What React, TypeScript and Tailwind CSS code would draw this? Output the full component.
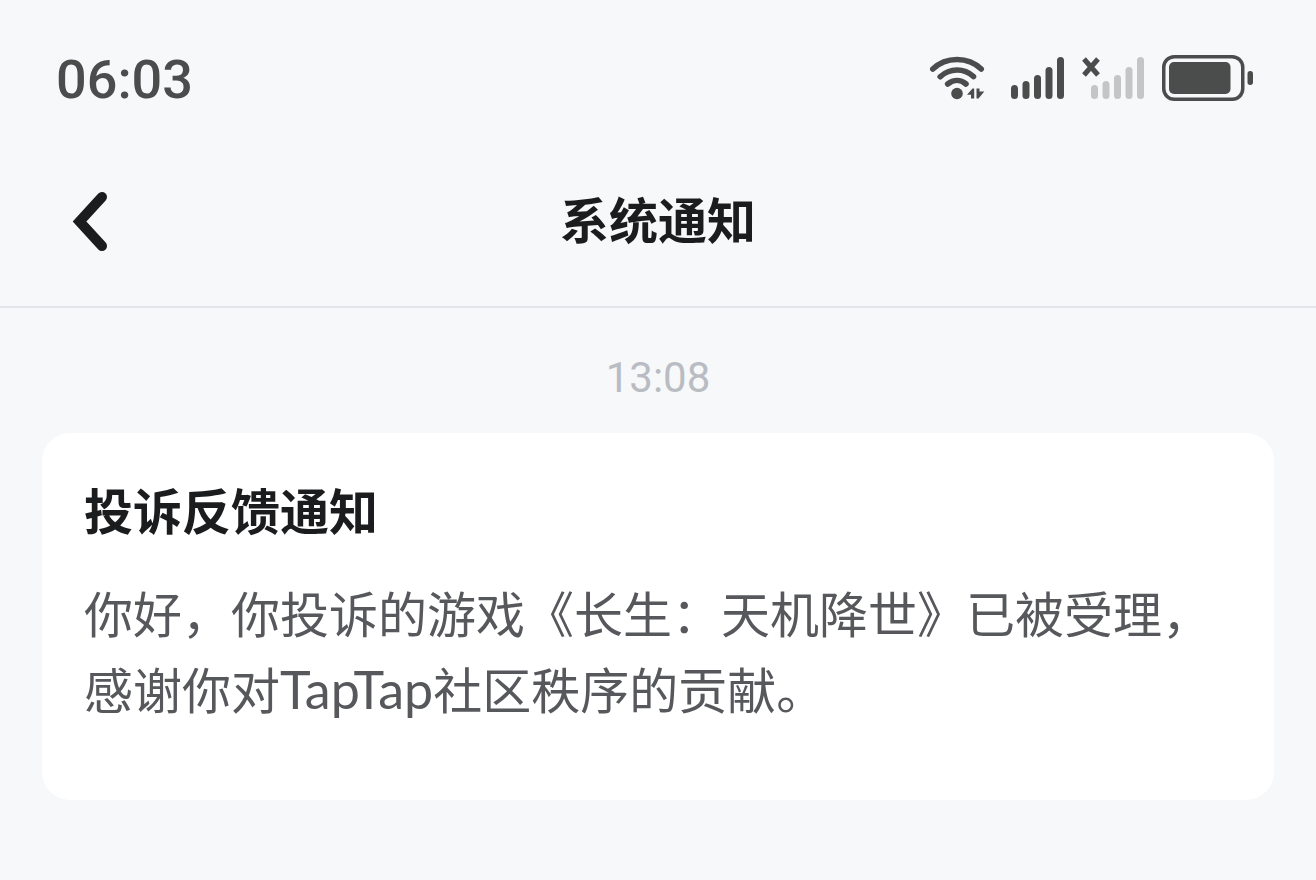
const heights = [14, 18, 24, 32, 42];

function SignalBars({ className }: { className: string }) {
  return (
    <svg viewBox="0 0 54 42" className={`h-[42px] w-[54px] ${className}`} fill="currentColor" aria-hidden="true">
      {heights.map((h, i) => (
        <rect key={h} x={i * 11.5} y={42 - h} width="7" height={h} rx="3.5" />
      ))}
    </svg>
  );
}

function WifiIcon() {
  return (
    <svg viewBox="0 0 56 44" className="h-11 w-14" fill="none" stroke="currentColor" strokeWidth="5.6" strokeLinecap="round" aria-hidden="true">
      <path d="M3.8 13C17 0.3 39 0.3 52.2 13" />
      <path d="M11.2 20.7C21 11.8 35 11.8 44.500 20.500" />
      <path d="M18.700 28C24.500 23.300 31.500 23.300 37 28" />
      <circle cx="28" cy="37.500" r="5.800" fill="currentColor" stroke="none" />
      <path d="M45.200 32.500V42.500H42V38.800H38L43.500 32.500ZM47.500 32.500H50.500V35.500H55.300L49.500 42.500H47.500Z" fill="currentColor" stroke="none" />
    </svg>
  );
}

function BatteryIcon() {
  return (
    <svg viewBox="0 0 92 46" className="h-[46px] w-[92px]" fill="none" aria-hidden="true">
      <rect x="1.750" y="1.750" width="79" height="42.500" rx="10.500" stroke="currentColor" strokeWidth="3.500" />
      <rect x="7" y="7" width="61.500" height="32" rx="5" fill="currentColor" />
      <rect x="85.500" y="16" width="5.500" height="14" rx="2.700" fill="currentColor" />
    </svg>
  );
}

export default function App() {
  return (
    <div className="min-h-screen bg-[#f7f8fa] font-['Noto_Sans_CJK_SC',sans-serif] text-[#1b1c1e]">
      <div className="flex items-center justify-between px-14 pt-10 text-[#4b4c4c]">
        <time className="pt-1 font-['Roboto',sans-serif] text-[54px] leading-[72px] font-medium">06:03</time>
        <div className="flex items-center pr-1.5">
          <WifiIcon />
          <SignalBars className="ml-[26px]" />
          <div className="relative ml-[26px]">
            <SignalBars className="text-[#c4c5c6]" />
            <svg viewBox="0 0 18 20" className="absolute top-0 -left-[9px] h-5 w-[18px]" fill="none" stroke="currentColor" strokeWidth="5" aria-hidden="true">
              <path d="M2 2L16 18M16 2L2 18" />
            </svg>
          </div>
          <span className="ml-[17px]">
            <BatteryIcon />
          </span>
        </div>
      </div>

      <header className="mt-5 grid h-[172px] grid-cols-[1fr_auto_1fr] items-center border-b-2 border-[#e3e5e8] px-[72px]">
        <button type="button" aria-label="返回" className="justify-self-start">
          <svg viewBox="0 0 36 60" className="h-[60px] w-9" fill="none" stroke="currentColor" strokeWidth="10" strokeLinecap="round" aria-hidden="true">
            <path d="M30 6L7.500 30.500L30 55" strokeLinejoin="miter" />
          </svg>
        </button>
        <h1 className="pb-1.5 text-[49px] leading-[64px] font-bold">系统通知</h1>
      </header>

      <main className="px-[42px] pt-10 pb-20">
        <p className="text-center font-['Roboto',sans-serif] text-[42px] leading-[60px] text-[#b9bdc3]">
          <time>13:08</time>
        </p>
        <article className="mt-[25px] rounded-[28px] bg-white px-[42px] pt-11 pb-[74px]">
          <h2 className="text-[49px] leading-[64px] font-bold">投诉反馈通知</h2>
          <p className="mt-[33px] text-[49px] leading-[76px] text-[#56585c]">
            你好，你投诉的游戏《长生：天机降世》已被受理，感谢你对<span className="font-['Lato',sans-serif] text-[52px] leading-none">TapTap</span>社区秩序的贡献。
          </p>
        </article>
      </main>
    </div>
  );
}
